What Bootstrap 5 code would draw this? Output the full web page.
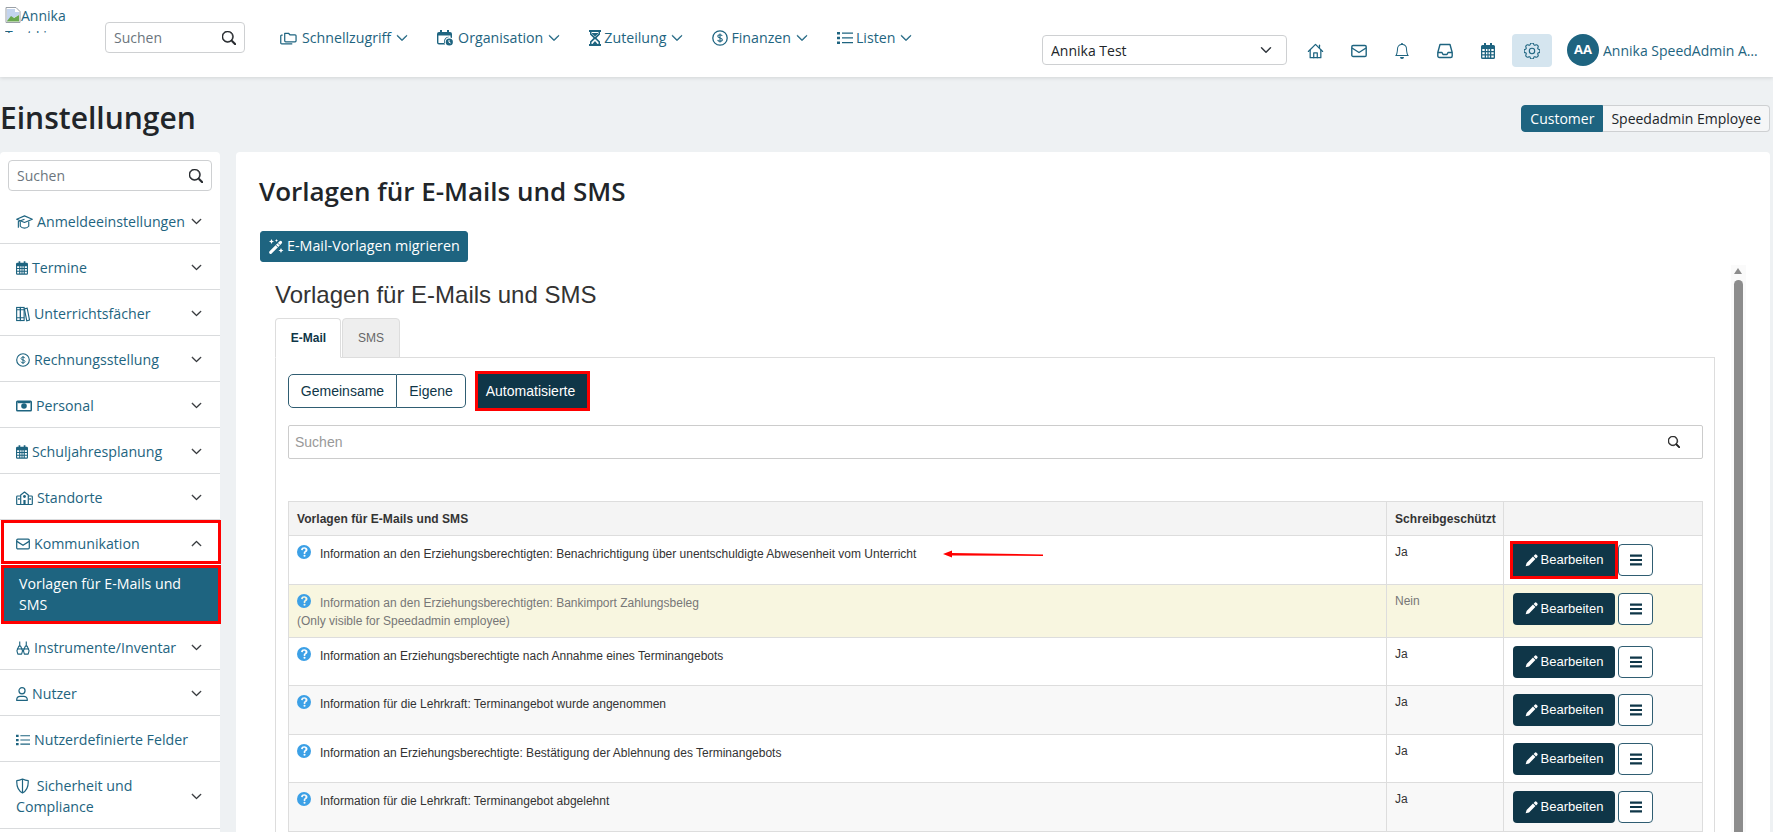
<!DOCTYPE html>
<html lang="de">
<head>
  <meta charset="UTF-8" />
  <meta name="viewport" content="width=device-width, initial-scale=1.0"/>
  <title>Einstellungen</title>
  <link href="https://cdn.jsdelivr.net/npm/bootstrap@5.3.0/dist/css/bootstrap.min.css" rel="stylesheet"/>
  <style>
    html, body { height: 100%; overflow: hidden; }
    body { background: #eef1f3; font-family: "Open Sans", "Noto Sans", sans-serif; font-size: 14px; color: #212529; }
    .ic { width: 16px; height: 16px; flex: none; fill: currentColor; vertical-align: -3px; }
    .ic-find { width: 14px; height: 14px; color: #212529; stroke: currentColor; stroke-width: .7; }

    /* top bar */
    .topbar { height: 77px; background: #fff; box-shadow: 0 1px 4px rgba(0,0,0,.12); position: relative; }
    .brand-box { width: 65px; height: 27px; margin: 6px 35px 0 5px; overflow: hidden; line-height: 20px; color: #1e6480; flex: none; }
    .brand-box svg { width: 16px; height: 16px; vertical-align: -2px; }
    .top-left { padding-top: 22px; }
    .search-box { border: 1px solid #ced0d2; border-radius: 4px; height: 31px; background: #fff; color: #6c757d; padding: 0 8px; }
    .top-search { width: 140px; margin-right: 35px; }
    .top-link { color: #1e6480; text-decoration: none; height: 31px; margin-right: 29px; font-size: 14.2px; }
    .top-link .ic { margin-right: 3px; }
    .top-link .ic.gap-wide { margin-right: 5px; }
    .top-link .chev { width: 12px; height: 12px; margin: 0 0 0 5px; }
    .top-right { margin-left: auto; padding: 34px 14px 0 0; }
    .school-select { width: 245px; height: 30px; margin-top: 1px; margin-right: 7px; font-size: 14px; padding: 0 8px; border-color: #ced0d2; border-radius: 4px; color: #212529; }
    .top-icon { width: 43px; height: 33px; color: #1e6480; }
    .top-icon.is-on { background: #d5e5ef; border-radius: 4px; width: 40px; margin: 0 0 0 3px; }
    .avatar { width: 32px; height: 32px; flex: none; border-radius: 50%; background: #1e6480; color: #fff; font-weight: 700; font-size: 13px; margin: 0 4px 0 15px; }
    .user-name { color: #1e6480; width: 156px; font-size: 14px; line-height: 34px; }

    /* page head */
    .page-head { height: 75px; padding: 26px 3px 0 0; }
    .page-title { font-size: 30px; font-weight: 600; line-height: 1; margin: 0; }
    .mode-btn { font-size: 14px; height: 27px; margin-top: 2px; padding: 0 8px; border: 1px solid #ced0d2; line-height: 25px; background: #f5f6f7; color: #212529; }
    .mode-btn.is-on { background: #1e6480; border-color: #1e6480; color: #fff; }
    .mode-btn:first-child { border-radius: 4px 0 0 4px; }
    .mode-btn:last-child { border-radius: 0 4px 4px 0; border-left: 0; }
    .page-body { height: 680px; overflow: hidden; }

    /* sidebar */
    .side { width: 220px; flex: none; background: #fff; border-radius: 4px 4px 0 0; padding-top: 8px; margin-right: 16px; }
    .side-search { margin: 0 8px 7px; }
    .side-item { display: flex; align-items: center; color: #1e6480; text-decoration: none; padding: 13px 18px 11px 16px; border-bottom: 1px solid #d9dbdd; line-height: 21px; font-size: 14.2px; }
    .side-item .label { flex-grow: 1; }
    .side-item .ic { margin-right: 4px; }
    .side-item .chev { width: 11px; height: 11px; color: #212529; margin: 0; }
    .side-open { outline: 3px solid #f00; outline-offset: -3px; border-bottom: 0; width: 220px; margin-left: 1px; padding-left: 15px; padding-right: 19px; height: 44px; }
    .side-sub { background: #1e6480; color: #fff; border: 3px solid #f00; width: 220px; margin: 1px 0 0 1px; padding: 5px 14px 4px 15px; line-height: 21px; font-size: 14.2px; height: 59px; }
    .iw-12 { width: 12px; }
    .iw-13 { width: 13px; }
    .iw-14 { width: 14px; }
    .iw-17 { width: 17px; }

    /* main panel */
    .panel { flex-grow: 1; min-width: 0; background: #fff; border-radius: 4px 4px 0 0; margin-right: 3px; padding: 20px 0 0 23px; overflow: hidden; }
    .panel-title { font-size: 26px; font-weight: 600; line-height: 38px; margin: 0 0 21px; }
    .migrate-btn { background: #1e6480; border-color: #1e6480; color: #fff; height: 31px; margin-left: 1px; padding: 0 7px; font-size: 14.3px; border-radius: 3px; line-height: 1; display: inline-flex; align-items: center; gap: 3px; }
    .frame-row { margin-top: 20px; padding-left: 16px; }
    .frame { flex: none; width: 1440px; font-family: "Liberation Sans", Arial, sans-serif; color: #333; }
    .frame-title { font-size: 24px; font-weight: 400; line-height: 26px; margin: 0 0 10px; }
    .tab-line { display: flex; gap: 1px; padding: 0; margin: 0; list-style: none; }
    .tab-item { height: 40px; font-size: 12px; line-height: 39px; text-align: center; border: 1px solid #ddd; border-radius: 4px 4px 0 0; }
    .tab-item.is-on { width: 66px; background: #fff; font-weight: 700; color: #0f3648; border-bottom-color: #fff; position: relative; padding-left: 1px; }
    .tab-item.is-off { width: 58px; background: #eee; color: #666; }
    .tab-pane-box { border: 1px solid #ddd; border-bottom: 0; margin-top: -1px; padding: 16px 11px 0 12px; }
    .seg-btn { height: 34px; font-size: 14px; background: #fff; color: #0f3648; border: 1px solid #2f5d72; padding: 0; text-align: center; }
    .seg-a { width: 109px; border-radius: 5px 0 0 5px; }
    .seg-b { width: 69px; border-left: 0; border-radius: 0 5px 5px 0; }
    .seg-c { width: 109px; margin-left: 12px; padding-right: 4px; background: #0f3648; color: #fff; outline: 3px solid #f00; border-color: #0f3648; border-radius: 0; }
    .inner-search { height: 34px; margin-top: 17px; border: 1px solid #ccc; border-radius: 2px; color: #999; font-size: 14px; padding: 0 22px 0 6px; }
    .inner-search .ic { width: 12px; height: 12px; color: #222; stroke: currentColor; stroke-width: .8; }
    .tpl-table { width: 100%; margin: 42px 0 0; border-collapse: collapse; table-layout: fixed; font-size: 12px; }
    .col-ro { width: 117px; }
    .col-act { width: 199px; }
    .tpl-table th, .tpl-table td { border: 1px solid #ddd; padding: 0; }
    .tpl-table th { background: #f4f4f4; height: 34px; padding: 0 8px; font-weight: 700; font-size: 12px; vertical-align: middle; letter-spacing: .05px; }
    .tpl-table td { vertical-align: top; color: #333; }
    .cell-text { padding: 9px 8px 0 8px; line-height: 16px; white-space: nowrap; }
    .cell-text .q { width: 14px; height: 14px; color: #3ca0e6; margin-right: 9px; vertical-align: -1px; }
    .row-yes { height: 48.5px; }
    .row-alt td { background: #f8f8f8; }
    .row-hidden { height: 53px; }
    .row-hidden td { background: #f8f6e0; color: #777; }
    .row-hidden .only-note { margin-top: 3px; display: block; line-height: 15px; }
    .yes-cell { padding: 8px 8px 0 !important; }
    .act-cell { padding: 8px 8px 0 9px !important; white-space: nowrap; }
    .edit-btn { width: 102px; height: 32px; background: #0f3648; color: #fff; border: 0; border-radius: 4px; font-size: 13px; padding: 0; display: inline-flex; align-items: center; justify-content: center; gap: 3px; }
    .edit-btn .ic { width: 13px; height: 13px; }
    .edit-flag { outline: 3px solid #f00; border-radius: 0; }
    .more-btn { width: 35px; height: 32px; margin-left: 3px; background: #fff; color: #0f3648; border: 1px solid #2f5d72; border-radius: 4px; padding: 0; vertical-align: top; display: inline-flex; align-items: center; justify-content: center; }
    .more-btn .ic { width: 12px; height: 12px; }
    .red-arrow { width: 100px; height: 10px; margin-left: 27px; vertical-align: -1px; }
    .scroll-track { flex: none; width: 15px; height: 620px; margin: -17px 0 0 16px; background: #fafafa; padding-top: 15px; position: relative; }
    .scroll-up { position: absolute; top: 3px; left: 3px; width: 0; height: 0; border: 4.5px solid transparent; border-top: 0; border-bottom: 6px solid #8c8c8c; }
    .scroll-thumb { width: 9px; margin-left: 3px; height: 100%; background: #8c8c8c; border-radius: 5px 5px 0 0; }
  </style>
</head>
<body>
  <svg width="0" height="0" class="position-absolute">
    <symbol id="i-search" viewBox="0 0 16 16"><path d="M11.742 10.344a6.5 6.5 0 1 0-1.397 1.398h-.001c.03.04.062.078.098.115l3.85 3.85a1 1 0 0 0 1.415-1.414l-3.85-3.85a1.007 1.007 0 0 0-.115-.1zM12 6.5a5.5 5.5 0 1 1-11 0 5.5 5.5 0 0 1 11 0z"/></symbol>
    <symbol id="i-chev" viewBox="0 0 16 16"><path fill-rule="evenodd" stroke="currentColor" stroke-width="1" d="M1.646 4.646a.5.5 0 0 1 .708 0L8 10.293l5.646-5.647a.5.5 0 0 1 .708.708l-6 6a.5.5 0 0 1-.708 0l-6-6a.5.5 0 0 1 0-.708z"/></symbol>
    <symbol id="i-chev-up" viewBox="0 0 16 16"><path fill-rule="evenodd" stroke="currentColor" stroke-width="1" d="M7.646 4.646a.5.5 0 0 1 .708 0l6 6a.5.5 0 0 1-.708.708L8 5.707l-5.646 5.647a.5.5 0 0 1-.708-.708l6-6z"/></symbol>
    <symbol id="i-folders" viewBox="0 0 18 16"><g fill="none" stroke="currentColor" stroke-width="1.3" stroke-linejoin="round"><path d="M5 3h4l1.5 1.6H16a1 1 0 0 1 1 1V11a1 1 0 0 1-1 1H6a1 1 0 0 1-1-1z"/><path d="M2.8 5H1.6a.8.8 0 0 0-.8.8v7.4a1 1 0 0 0 1 1H13"/></g></symbol>
    <symbol id="i-cal-clock" viewBox="0 0 16 16"><path d="M3 0h2v2h5V0h2v2h1a2 2 0 0 1 2 2v4.200a4.500 4.500 0 0 0-6.800 6.300H2a2 2 0 0 1-2-2V4a2 2 0 0 1 2-2h1zM1.400 5.500v7c0 .3.3.6.6.6h6.200a4.500 4.500 0 0 1 5.300-6V5.500z"/><circle cx="12.300" cy="12" r="3.600"/><path d="M12 10v2.300l1.600.8" stroke="#fff" stroke-width="1" fill="none"/></symbol>
    <symbol id="i-hourglass" viewBox="0 0 12 16"><path d="M0 0h12v2h-1v2.500L7.500 8 11 11.500V14h1v2H0v-2h1v-2.500L4.500 8 1 4.500V2H0zM2.500 2v1.800L6 7l3.500-3.200V2zM6 9l-3.500 3.200V14h7v-1.800z"/><path d="M3.500 14 6 11l2.500 3z"/><path d="M3 3h6v.8L6 6.500 3 3.800z"/></symbol>
    <symbol id="i-dollar" viewBox="0 0 16 16"><circle cx="8" cy="8" r="7.200" fill="none" stroke="currentColor" stroke-width="1.300"/><path d="M10.200 5.900C10 5 9 4.700 8 4.700c-1.200 0-2.200.6-2.200 1.600 0 2.200 4.500 1.200 4.500 3.400 0 1-1 1.600-2.300 1.600-1.100 0-2.100-.4-2.300-1.400M8 3.500v9" fill="none" stroke="currentColor" stroke-width="1.100"/></symbol>
    <symbol id="i-list" viewBox="0 0 16 16"><path d="M0 2h3v2.500H0zM0 6.800h3v2.500H0zM0 11.500h3V14H0zM5 2.500h11v1.300H5zM5 7.300h11v1.300H5zM5 12h11v1.300H5z"/></symbol>
    <symbol id="i-home" viewBox="0 0 18 18"><g fill="none" stroke="currentColor" stroke-width="1.400" stroke-linejoin="round" stroke-linecap="round"><path d="M1 9.500 9 1.500l8 8"/><path d="M3 8v8.500h12V8"/><path d="M7 16.500V11h4v5.500"/><path d="M13.500 2.500V5"/></g></symbol>
    <symbol id="i-mail" viewBox="0 0 16 16"><g fill="none" stroke="currentColor" stroke-width="1.400" stroke-linejoin="round"><rect x=".8" y="2.500" width="14.400" height="11" rx="1.300"/><path d="M1 5l7 4.500L15 5"/></g></symbol>
    <symbol id="i-bell" viewBox="0 0 16 16"><path d="M8 16a2 2 0 0 0 2-2H6a2 2 0 0 0 2 2zM8 1.918l-.797.161A4.002 4.002 0 0 0 4 6c0 .628-.134 2.197-.459 3.742-.16.767-.376 1.566-.663 2.258h10.244c-.287-.692-.502-1.49-.663-2.258C12.134 8.197 12 6.628 12 6a4.002 4.002 0 0 0-3.203-3.920L8 1.917zM14.220 12c.223.447.481.801.78 1H1c.299-.199.557-.553.78-1C2.680 10.200 3 6.880 3 6c0-2.420 1.720-4.440 4.005-4.901a1 1 0 1 1 1.990 0A5.002 5.002 0 0 1 13 6c0 .880.320 4.200 1.220 6z"/></symbol>
    <symbol id="i-inbox" viewBox="0 0 16 16"><g fill="none" stroke="currentColor" stroke-width="1.400" stroke-linejoin="round"><path d="M3 1.500h10l2.200 8V13a1.500 1.500 0 0 1-1.500 1.500H2.300A1.500 1.500 0 0 1 .8 13V9.500z"/><path d="M1 9.500h4l1 2h4l1-2h4"/></g></symbol>
    <symbol id="i-cal" viewBox="0 0 14 16"><path d="M3 0h2v2h4V0h2v2h1.500A1.500 1.500 0 0 1 14 3.500v11a1.500 1.500 0 0 1-1.500 1.500h-11A1.500 1.500 0 0 1 0 14.500v-11A1.500 1.500 0 0 1 1.500 2H3zM1.300 6v2h2.400V6zm3.700 0v2h1.400V6h1.200v2h1.300V6zm5.300 0v2h2.400V6zM1.300 9.300v2h2.400v-2zm3.700 0v2h1.400v-2zm2.600 0v2h1.300v-2zm2.700 0v2h2.400v-2zM1.300 12.500v2h2.400v-2zm3.700 0v2h1.400v-2zm2.600 0v2h1.300v-2zm2.700 0v2h2.400v-2z"/></symbol>
    <symbol id="i-gear" viewBox="0 0 16 16"><g fill="none" stroke="currentColor" stroke-width="1.100"><circle cx="8" cy="8" r="2.700"/><path d="M9.796 1.343c-.527-1.790-3.065-1.790-3.592 0l-.094.319a.873.873 0 0 1-1.255.520l-.292-.160c-1.640-.892-3.433.902-2.540 2.541l.159.292a.873.873 0 0 1-.520 1.255l-.319.094c-1.790.527-1.790 3.065 0 3.592l.319.094a.873.873 0 0 1 .520 1.255l-.160.292c-.892 1.640.901 3.434 2.541 2.540l.292-.159a.873.873 0 0 1 1.255.520l.094.319c.527 1.790 3.065 1.790 3.592 0l.094-.319a.873.873 0 0 1 1.255-.520l.292.160c1.640.893 3.434-.902 2.540-2.541l-.159-.292a.873.873 0 0 1 .520-1.255l.319-.094c1.790-.527 1.790-3.065 0-3.592l-.319-.094a.873.873 0 0 1-.520-1.255l.160-.292c.893-1.640-.902-3.433-2.541-2.540l-.292.159a.873.873 0 0 1-1.255-.520z"/></g></symbol>
    <symbol id="i-cap" viewBox="0 0 18 16"><g fill="none" stroke="currentColor" stroke-width="1.200" stroke-linejoin="round"><path d="M9 1.500 17.300 5 9 8.500 .7 5z"/><path d="M4.500 7.500v5c1 1.300 3 2 4.500 2s3.500-.7 4.500-2v-5"/><path d="M9 5 2.500 7.500V14"/></g></symbol>
    <symbol id="i-books" viewBox="0 0 15 16"><g fill="none" stroke="currentColor" stroke-width="1.200"><rect x=".7" y="1" width="4" height="14"/><rect x="4.700" y="1" width="4" height="14"/><path d="M9 2.500l3-.8 2.500 12.800-3 .7z"/><path d="M.7 12h8M.7 3.500h8"/></g></symbol>
    <symbol id="i-money" viewBox="0 0 16 16"><path d="M1.500 2.500h13A1.500 1.500 0 0 1 16 4v8a1.500 1.500 0 0 1-1.500 1.500h-13A1.500 1.500 0 0 1 0 12V4a1.500 1.500 0 0 1 1.500-1.500zm0 1.500v8h13V4z"/><circle cx="8" cy="8" r="2.800"/><rect x="1.500" y="4" width="13" height="1.200"/></symbol>
    <symbol id="i-school" viewBox="0 0 17 16"><g fill="none" stroke="currentColor" stroke-width="1.200" stroke-linejoin="round"><path d="M4.700 6H1.500a.8.8 0 0 0-.8.8v7a.7.7 0 0 0 .7.7h14.200a.7.7 0 0 0 .7-.7v-7a.8.8 0 0 0-.8-.8h-3.200"/><path d="M4.700 14.500V5L8.500 2l3.800 3v9.500"/></g><circle cx="8.500" cy="6.500" r="1.400"/><path d="M7.400 10h2.200v4.500H7.400zM2.300 8h1.300v2H2.300zM13.400 8h1.300v2h-1.300z"/></symbol>
    <symbol id="i-instr" viewBox="0 0 15 16"><g fill="none" stroke="currentColor" stroke-width="1.200" stroke-linejoin="round"><path d="M4 1v5M3 6h2l2 5-1 3.500H2L1 11z"/><path d="M11 1v5M10 6h2l2 5-1 3.500H9L8 11z"/><path d="M1 9h13"/></g></symbol>
    <symbol id="i-person" viewBox="0 0 13 16"><g fill="none" stroke="currentColor" stroke-width="1.300"><circle cx="6.500" cy="4.500" r="3.300"/><path d="M.8 15v-1c0-2 1.700-3.500 3.700-3.500h4c2 0 3.700 1.500 3.700 3.500v1z" stroke-linejoin="round"/></g></symbol>
    <symbol id="i-shield" viewBox="0 0 13 16"><g fill="none" stroke="currentColor" stroke-width="1.200" stroke-linejoin="round"><path d="M6.500 1c2 1 3.700 1.500 5.700 1.600.3 5-.8 9.700-5.700 12.400C1.600 12.300.5 7.600.8 2.600 2.800 2.500 4.500 2 6.500 1z"/><path d="M6.500 1v14"/></g></symbol>
    <symbol id="i-wand" viewBox="0 0 16 16"><path d="M12.600 3.400 2.600 13.400" fill="none" stroke="currentColor" stroke-width="3" stroke-linecap="round"/><path d="M9.800 4.200l2.400 2.400M7.900 6.100l2.400 2.400" fill="none" stroke="#1e6480" stroke-width=".9"/><path d="M3.500 0l.8 1.700L6 2.500l-1.700.8L3.500 5l-.8-1.700L1 2.500l1.700-.8zM13 9l.8 1.700 1.700.8-1.700.8-.8 1.700-.8-1.700-1.700-.8 1.700-.8zM8.500 0l.5 1 1 .5-1 .5-.5 1-.5-1-1-.5 1-.5z"/></symbol>
    <symbol id="i-pencil" viewBox="0 0 16 16"><path d="M12.100.9a1.500 1.500 0 0 1 2.100 0l.9.9a1.500 1.500 0 0 1 0 2.100L13.600 5.400 10.600 2.400zM9.800 3.200l3 3L5 14l-4.200 1.200L2 11z"/></symbol>
    <symbol id="i-help" viewBox="0 0 16 16"><path fill-rule="evenodd" d="M8 0a8 8 0 1 1 0 16A8 8 0 0 1 8 0zm-.3 10.200H9.500V9.500c0-.6.300-.9 1-1.400.9-.7 1.500-1.400 1.500-2.700C12 3.600 10.300 2.600 8.300 2.600c-1.900 0-3.500.9-3.700 3l2 .3c.2-1 .8-1.500 1.600-1.500.9 0 1.500.5 1.500 1.300 0 .6-.3 1-1 1.500-.8.600-1 1.200-1 2.100zM8.600 11a1.200 1.200 0 1 0 0 2.400 1.200 1.200 0 0 0 0-2.400z"/></symbol>
    <symbol id="i-menu" viewBox="0 0 12 12"><path d="M0 .5h12v2.200H0zM0 4.900h12v2.200H0zM0 9.300h12v2.200H0z"/></symbol>
    <symbol id="i-broken" viewBox="0 0 16 16"><path d="M1 .5h10l4 4v11H1z" fill="#fff" stroke="#9aa0a6" stroke-width="1"/><path d="M2 2h8v3h4v3L2 14z" fill="#c3d4ee"/><path d="M2 14l4-5 3 2 5-3v6.500H2z" fill="#6aa84f"/></symbol>
  </svg>

  <header class="topbar d-flex">
    <div class="brand-box"><svg aria-hidden="true"><use href="#i-broken"/></svg>Annika Test Live</div>
    <div class="top-left d-flex align-items-start">
      <div class="search-box top-search d-flex align-items-center justify-content-between">
        <span>Suchen</span>
        <svg class="ic ic-find"><use href="#i-search"/></svg>
      </div>
      <a class="top-link d-flex align-items-center" href="#"><svg class="ic iw-17 gap-wide"><use href="#i-folders"/></svg>Schnellzugriff<svg class="ic chev"><use href="#i-chev"/></svg></a>
      <a class="top-link d-flex align-items-center" href="#"><svg class="ic gap-wide"><use href="#i-cal-clock"/></svg>Organisation<svg class="ic chev"><use href="#i-chev"/></svg></a>
      <a class="top-link d-flex align-items-center" href="#"><svg class="ic iw-12"><use href="#i-hourglass"/></svg>Zuteilung<svg class="ic chev"><use href="#i-chev"/></svg></a>
      <a class="top-link d-flex align-items-center" href="#"><svg class="ic"><use href="#i-dollar"/></svg>Finanzen<svg class="ic chev"><use href="#i-chev"/></svg></a>
      <a class="top-link d-flex align-items-center" href="#"><svg class="ic"><use href="#i-list"/></svg>Listen<svg class="ic chev"><use href="#i-chev"/></svg></a>
    </div>
    <div class="top-right d-flex align-items-start">
      <select class="form-select school-select"><option>Annika Test</option></select>
      <a class="top-icon d-flex align-items-center justify-content-center" href="#"><svg class="ic iw-17"><use href="#i-home"/></svg></a>
      <a class="top-icon d-flex align-items-center justify-content-center" href="#"><svg class="ic"><use href="#i-mail"/></svg></a>
      <a class="top-icon d-flex align-items-center justify-content-center" href="#"><svg class="ic"><use href="#i-bell"/></svg></a>
      <a class="top-icon d-flex align-items-center justify-content-center" href="#"><svg class="ic"><use href="#i-inbox"/></svg></a>
      <a class="top-icon d-flex align-items-center justify-content-center" href="#"><svg class="ic iw-14"><use href="#i-cal"/></svg></a>
      <a class="top-icon is-on d-flex align-items-center justify-content-center" href="#"><svg class="ic"><use href="#i-gear"/></svg></a>
      <div class="avatar d-flex align-items-center justify-content-center">AA</div>
      <div class="user-name text-truncate">Annika SpeedAdmin Annika</div>
    </div>
  </header>

  <div class="page-head d-flex justify-content-between align-items-start">
    <h1 class="page-title">Einstellungen</h1>
    <div class="d-flex">
      <button class="mode-btn is-on" type="button">Customer</button>
      <button class="mode-btn" type="button">Speedadmin Employee</button>
    </div>
  </div>

  <div class="page-body d-flex">
    <nav class="side">
      <div class="search-box side-search d-flex align-items-center justify-content-between">
        <span>Suchen</span>
        <svg class="ic ic-find"><use href="#i-search"/></svg>
      </div>
      <a class="side-item" href="#"><span class="label"><svg class="ic iw-17"><use href="#i-cap"/></svg>Anmeldeeinstellungen</span><svg class="ic chev"><use href="#i-chev"/></svg></a>
      <a class="side-item" href="#"><span class="label"><svg class="ic iw-12"><use href="#i-cal"/></svg>Termine</span><svg class="ic chev"><use href="#i-chev"/></svg></a>
      <a class="side-item" href="#"><span class="label"><svg class="ic iw-14"><use href="#i-books"/></svg>Unterrichtsfächer</span><svg class="ic chev"><use href="#i-chev"/></svg></a>
      <a class="side-item" href="#"><span class="label"><svg class="ic iw-14"><use href="#i-dollar"/></svg>Rechnungsstellung</span><svg class="ic chev"><use href="#i-chev"/></svg></a>
      <a class="side-item" href="#"><span class="label"><svg class="ic"><use href="#i-money"/></svg>Personal</span><svg class="ic chev"><use href="#i-chev"/></svg></a>
      <a class="side-item" href="#"><span class="label"><svg class="ic iw-12"><use href="#i-cal"/></svg>Schuljahresplanung</span><svg class="ic chev"><use href="#i-chev"/></svg></a>
      <a class="side-item" href="#"><span class="label"><svg class="ic iw-17"><use href="#i-school"/></svg>Standorte</span><svg class="ic chev"><use href="#i-chev"/></svg></a>
      <a class="side-item side-open" href="#"><span class="label"><svg class="ic iw-14"><use href="#i-mail"/></svg>Kommunikation</span><svg class="ic chev"><use href="#i-chev-up"/></svg></a>
      <div class="side-sub">Vorlagen für E-Mails und SMS</div>
      <a class="side-item" href="#"><span class="label"><svg class="ic iw-14"><use href="#i-instr"/></svg>Instrumente/Inventar</span><svg class="ic chev"><use href="#i-chev"/></svg></a>
      <a class="side-item" href="#"><span class="label"><svg class="ic iw-12"><use href="#i-person"/></svg>Nutzer</span><svg class="ic chev"><use href="#i-chev"/></svg></a>
      <a class="side-item" href="#"><span class="label"><svg class="ic iw-14"><use href="#i-list"/></svg>Nutzerdefinierte Felder</span></a>
      <a class="side-item" href="#"><span class="label"><svg class="ic iw-13"><use href="#i-shield"/></svg> Sicherheit und Compliance</span><svg class="ic chev"><use href="#i-chev"/></svg></a>
    </nav>

    <main class="panel">
      <h2 class="panel-title">Vorlagen für E-Mails und SMS</h2>
      <button class="btn migrate-btn" type="button"><svg class="ic"><use href="#i-wand"/></svg>E-Mail-Vorlagen migrieren</button>

      <div class="frame-row d-flex">
        <div class="frame">
          <h3 class="frame-title">Vorlagen für E-Mails und SMS</h3>
          <ul class="tab-line">
            <li class="tab-item is-on">E-Mail</li>
            <li class="tab-item is-off">SMS</li>
          </ul>
          <div class="tab-pane-box">
            <div class="d-flex">
              <button class="seg-btn seg-a" type="button">Gemeinsame</button>
              <button class="seg-btn seg-b" type="button">Eigene</button>
              <button class="seg-btn seg-c" type="button">Automatisierte</button>
            </div>
            <div class="inner-search d-flex align-items-center justify-content-between">
              <span>Suchen</span>
              <svg class="ic"><use href="#i-search"/></svg>
            </div>
            <table class="tpl-table">
              <colgroup>
                <col/>
                <col class="col-ro"/>
                <col class="col-act"/>
              </colgroup>
              <thead>
                <tr><th>Vorlagen für E-Mails und SMS</th><th>Schreibgeschützt</th><th></th></tr>
              </thead>
              <tbody>
                <tr class="row-yes">
                  <td><div class="cell-text"><svg class="ic q"><use href="#i-help"/></svg>Information an den Erziehungsberechtigten: Benachrichtigung über unentschuldigte Abwesenheit vom Unterricht<svg class="red-arrow" viewBox="0 0 100 10"><path d="M0 5 9 1.500V4l91 1.500V7L9 6.500V8.500z" fill="#f00"/></svg></div></td>
                  <td class="yes-cell"><div class="cell-text p-0">Ja</div></td>
                  <td class="act-cell"><button class="edit-btn edit-flag" type="button"><svg class="ic"><use href="#i-pencil"/></svg>Bearbeiten</button><button class="more-btn" type="button"><svg class="ic"><use href="#i-menu"/></svg></button></td>
                </tr>
                <tr class="row-hidden">
                  <td><div class="cell-text"><svg class="ic q"><use href="#i-help"/></svg>Information an den Erziehungsberechtigten: Bankimport Zahlungsbeleg<span class="only-note">(Only visible for Speedadmin employee)</span></div></td>
                  <td class="yes-cell"><div class="cell-text p-0">Nein</div></td>
                  <td class="act-cell"><button class="edit-btn" type="button"><svg class="ic"><use href="#i-pencil"/></svg>Bearbeiten</button><button class="more-btn" type="button"><svg class="ic"><use href="#i-menu"/></svg></button></td>
                </tr>
                <tr class="row-yes">
                  <td><div class="cell-text"><svg class="ic q"><use href="#i-help"/></svg>Information an Erziehungsberechtigte nach Annahme eines Terminangebots</div></td>
                  <td class="yes-cell"><div class="cell-text p-0">Ja</div></td>
                  <td class="act-cell"><button class="edit-btn" type="button"><svg class="ic"><use href="#i-pencil"/></svg>Bearbeiten</button><button class="more-btn" type="button"><svg class="ic"><use href="#i-menu"/></svg></button></td>
                </tr>
                <tr class="row-yes row-alt">
                  <td><div class="cell-text"><svg class="ic q"><use href="#i-help"/></svg>Information für die Lehrkraft: Terminangebot wurde angenommen</div></td>
                  <td class="yes-cell"><div class="cell-text p-0">Ja</div></td>
                  <td class="act-cell"><button class="edit-btn" type="button"><svg class="ic"><use href="#i-pencil"/></svg>Bearbeiten</button><button class="more-btn" type="button"><svg class="ic"><use href="#i-menu"/></svg></button></td>
                </tr>
                <tr class="row-yes">
                  <td><div class="cell-text"><svg class="ic q"><use href="#i-help"/></svg>Information an Erziehungsberechtigte: Bestätigung der Ablehnung des Terminangebots</div></td>
                  <td class="yes-cell"><div class="cell-text p-0">Ja</div></td>
                  <td class="act-cell"><button class="edit-btn" type="button"><svg class="ic"><use href="#i-pencil"/></svg>Bearbeiten</button><button class="more-btn" type="button"><svg class="ic"><use href="#i-menu"/></svg></button></td>
                </tr>
                <tr class="row-yes row-alt">
                  <td><div class="cell-text"><svg class="ic q"><use href="#i-help"/></svg>Information für die Lehrkraft: Terminangebot abgelehnt</div></td>
                  <td class="yes-cell"><div class="cell-text p-0">Ja</div></td>
                  <td class="act-cell"><button class="edit-btn" type="button"><svg class="ic"><use href="#i-pencil"/></svg>Bearbeiten</button><button class="more-btn" type="button"><svg class="ic"><use href="#i-menu"/></svg></button></td>
                </tr>
              </tbody>
            </table>
          </div>
        </div>
        <div class="scroll-track"><div class="scroll-up"></div><div class="scroll-thumb"></div></div>
      </div>
    </main>
  </div>

  <script src="https://cdn.jsdelivr.net/npm/bootstrap@5.3.0/dist/js/bootstrap.bundle.min.js"></script>
</body>
</html>
